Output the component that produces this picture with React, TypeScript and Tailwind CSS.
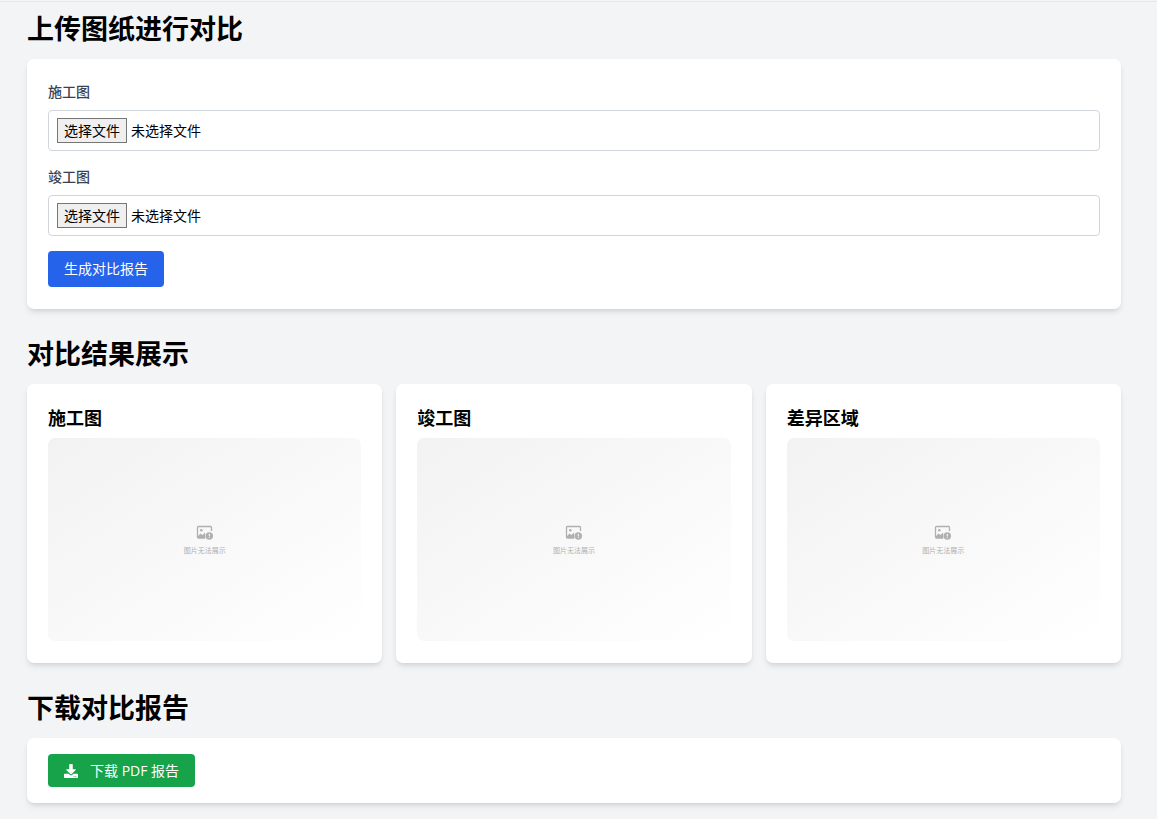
import { useRef, useState } from "react";
import { FaDownload } from "react-icons/fa";

interface FileFieldProps {
  id: string;
  label: string;
}

const FileField = ({ id, label }: FileFieldProps) => {
  const inputRef = useRef<HTMLInputElement>(null);
  const [fileName, setFileName] = useState("");

  return (
    <div>
      <label
        htmlFor={id}
        className="block mb-[7px] leading-[22px] font-medium text-[#374151]"
      >
        {label}
      </label>
      <div className="relative flex items-center gap-1 border border-gray-300 rounded-[4px] py-[7px] px-2 leading-[19px]">
        <input
          ref={inputRef}
          id={id}
          type="file"
          accept="image/*,.pdf"
          tabIndex={-1}
          onChange={(e) => setFileName(e.target.files?.[0]?.name ?? "")}
          className="sr-only"
        />
        <button
          type="button"
          onClick={() => inputRef.current?.click()}
          className="border border-[#767676] bg-[#efefef] px-[6px] py-[2px] text-black"
        >
          选择文件
        </button>
        <span className="text-black">{fileName || "未选择文件"}</span>
      </div>
    </div>
  );
};

const SectionTitle = ({ children }: { children: string }) => (
  <h2 className="mb-[14px] text-[27px] leading-8 font-bold text-black">
    {children}
  </h2>
);

const ImagePlaceholder = () => (
  <div className="flex h-[203px] flex-col items-center justify-center gap-[5px] rounded-[7px] bg-linear-to-br from-[#f2f2f2] to-white pt-[2px]">
    <svg width="18" height="16" viewBox="0 0 18 16" aria-hidden="true">
      <path
        d="M9 13H2.5A1 1 0 0 1 1.5 12V2.5A1 1 0 0 1 2.5 1.5H14.5A1 1 0 0 1 15.5 2.5V6"
        fill="none"
        stroke="#b0b0b0"
        strokeWidth="1.3"
      />
      <circle cx="5.3" cy="5.2" r="1.3" fill="#b0b0b0" />
      <path d="M2 11L4.5 8.5L6.5 10L9 7.5L9.5 13H2Z" fill="#b0b0b0" />
      <circle cx="13.3" cy="11" r="3.7" fill="#b0b0b0" />
      <path d="M13.3 8.8V11.4M13.3 12.3V13.2" stroke="#fff" strokeWidth="1" />
    </svg>
    <span className="text-[7px] leading-[10px] text-[#b0b0b0]">
      图片无法展示
    </span>
  </div>
);

const results = ["施工图", "竣工图", "差异区域"];

export default function App() {
  return (
    <div className="min-h-screen bg-gray-100 pb-4 font-['Open_Sans','Noto_Sans_CJK_SC',sans-serif] text-[14px]">
      <header className="h-[2px] border-b border-gray-200" />
      <main className="pt-[11px] pr-9 pl-[27px]">
        <section className="mb-[29px]">
          <SectionTitle>上传图纸进行对比</SectionTitle>
          <form
            onSubmit={(e) => e.preventDefault()}
            className="flex flex-col gap-[15px] rounded-[7px] bg-white px-[21px] py-[22px] shadow-md"
          >
            <FileField id="construction" label="施工图" />
            <FileField id="as-built" label="竣工图" />
            <button
              type="submit"
              className="self-start rounded-[4px] bg-[#2563eb] px-4 py-[7px] leading-[22px] text-white"
            >
              生成对比报告
            </button>
          </form>
        </section>

        <section className="mb-[29px]">
          <SectionTitle>对比结果展示</SectionTitle>
          <div className="grid grid-cols-3 gap-[14px]">
            {results.map((name) => (
              <div
                key={name}
                className="rounded-[7px] bg-white px-[21px] py-[22px] shadow-md"
              >
                <h3 className="mb-[7px] text-[18px] leading-[25px] font-bold text-black">
                  {name}
                </h3>
                <ImagePlaceholder />
              </div>
            ))}
          </div>
        </section>

        <section>
          <SectionTitle>下载对比报告</SectionTitle>
          <div className="flex rounded-[7px] bg-white px-[21px] py-4 shadow-md">
            <button
              type="button"
              className="flex items-center gap-3 rounded-[4px] bg-[#16a34a] px-4 py-[6px] leading-[21px] text-white"
            >
              <FaDownload />
              下载 PDF 报告
            </button>
          </div>
        </section>
      </main>
    </div>
  );
}
